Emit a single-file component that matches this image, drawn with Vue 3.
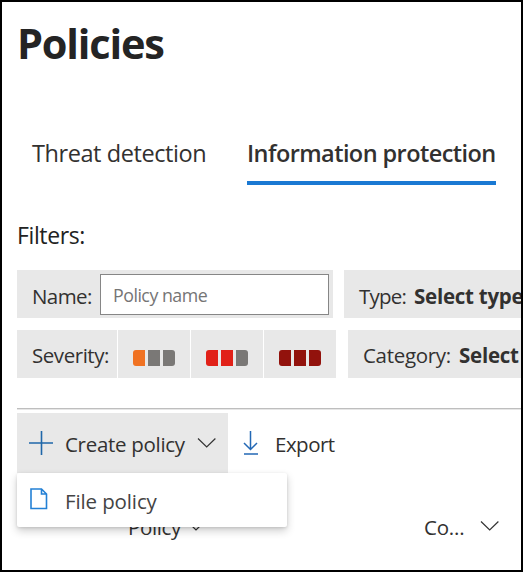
<script setup>
const severities = [
  { name: 'low', on: 1 },
  { name: 'medium', on: 2 },
  { name: 'high', on: 3 },
]
</script>

<template>
  <main class="page">
    <h1><span>Policies</span></h1>
    <nav class="tabs">
      <a class="tab t1">Threat detection</a>
      <a class="tab active">Information protection</a>
    </nav>
    <div class="filters-title"><span>Filters:</span></div>
    <div class="row">
      <label class="filter name">
        <span class="name-label">Name:</span>
        <input type="text" placeholder="Policy name" />
      </label>
      <div class="filter type"><span class="type-label">Type:</span><b class="type-value">Select type</b></div>
    </div>
    <div class="row second">
      <div class="severity">
        <div class="sev-label"><span>Severity:</span></div>
        <div v-for="s in severities" :key="s.name" class="sev" :class="s.name">
          <i v-for="n in 3" :key="n" :class="{ on: n <= s.on }"></i>
        </div>
      </div>
      <div class="filter category"><span class="cat-label">Category:</span><b class="cat-value">Select</b></div>
    </div>
    <div class="rule"></div>
    <div class="toolbar">
      <div class="create">
        <svg class="plus" width="24" height="24" viewBox="0 0 24 24"><path d="M12.5 0v24M0 12h24" /></svg>
        <span class="create-text">Create policy</span>
        <svg class="chev" width="20" height="12" viewBox="0 0 20 12"><path d="M1 1.5l8.700 8.500L18.400 1.500" /></svg>
        <div class="menu">
          <svg width="18" height="22" viewBox="0 0 18 22"><path d="M1 1h10.500l5 5V20.500H1zM11.500 1v5h5" /></svg>
          <span class="file-text">File policy</span>
        </div>
      </div>
      <div class="export">
        <svg width="16" height="25" viewBox="0 0 16 25"><path d="M7.500 0v18.500M1 12l6.500 6.500L14 12M1 23h14" /></svg>
        <span class="export-text">Export</span>
      </div>
    </div>
    <div class="head">
      <span class="policy-text">Policy</span>
      <svg class="small" width="10" height="7" viewBox="0 0 10 7"><path d="M1 1l4 4 4-4" /></svg>
      <span class="co-text">Co...</span>
      <svg class="chev" width="20" height="12" viewBox="0 0 20 12"><path d="M1 1.500l8.700 8.500L18.400 1.500" /></svg>
    </div>
  </main>
</template>

<style>
body { margin: 0; background: #fff; }
</style>

<style scoped>
* { box-sizing: border-box; }
.page {
  width: 523px; height: 572px; overflow: hidden;
  border: 2px solid #000; padding-left: 15px;
  display: flex; flex-direction: column;
  font-family: "Open Sans", "Noto Sans", sans-serif;
  font-size: 20.5px; color: #323130; background: #fff;
  white-space: nowrap;
}
svg { flex: none; display: block; fill: none; stroke: #333; stroke-width: 1.2; }
span, b { flex: none; }
h1 { margin: 11px 0 0; height: 60px; line-height: 60px; font-size: 41.5px; font-weight: 700; color: #242424; letter-spacing: -1.2px; }
.tabs { display: flex; height: 45px; margin-top: 67px; padding-left: 15px; margin-bottom: 31px; font-size: 23.5px; line-height: 27px; }
.tab { height: 45px; }
.t1 { width: 215px; letter-spacing: -0.42px; }
.active { width: 249px; border-bottom: 4px solid #1a79d3; font-weight: 600; letter-spacing: -0.57px; }
.filters-title { height: 40px; line-height: 39px; font-size: 23px; color: #222; letter-spacing: -0.38px; margin-bottom: 14px; }
.row { display: flex; height: 48px; gap: 11px; line-height: 48px; flex: none; }
.second { margin-top: 12px; gap: 12px; }
.filter { display: flex; align-items: flex-start; background: #e8e8e8; padding-left: 15px; flex: none; }
.filter span, .filter b { padding-top: 2px; }
.second .filter span, .second .filter b { padding-top: 1px; }
.name { width: 316px; }
.name-label { width: 68px; letter-spacing: -0.6px; }
input { width: 229px; height: 41px; margin: 4px 0 0; border: 1px solid #868686; border-radius: 0; background: #fff; padding: 1px 12px 0 12px; font: 17.8px "Open Sans", sans-serif; letter-spacing: -0.5px; }
input::placeholder { color: #757575; opacity: 1; }
.type, .category { width: 200px; }
.type-label { width: 55px; letter-spacing: -0.8px; }
.type-value { letter-spacing: -0.25px; }
.cat-label { width: 96px; letter-spacing: -0.3px; }
.cat-value { letter-spacing: -0.25px; }
.severity { display: flex; gap: 1px; width: 319px; flex: none; }
.sev-label { width: 100px; background: #e8e8e8; padding-left: 15px; line-height: 51px; letter-spacing: -0.45px; }
.sev { width: 72px; background: #e8e8e8; display: flex; gap: 3px; padding: 20px 0 0 15px; }
.sev i { width: 12px; height: 16px; background: #7a7876; }
.sev i:first-child { border-radius: 3px 0 0 3px; }
.sev i:last-child { border-radius: 0 3px 3px 0; }
.low i.on { background: #f07222; }
.medium i.on { background: #e12118; }
.high i.on { background: #92120c; }
.rule { height: 2px; flex: none; margin-top: 30px; background: linear-gradient(#bebebe 50%, #e6e6e6 50%); }
.toolbar { display: flex; height: 60px; margin-top: 3px; flex: none; line-height: 58px; }
.create { position: relative; width: 211px; background: #e8e8e8; display: flex; align-items: center; padding-left: 12px; }
.create-text, .export-text { padding-top: 2px; }
.plus { stroke: #1f67a9; stroke-width: 1.6; margin-right: 12px; }
.create-text { width: 132px; letter-spacing: -0.3px; }
.menu { position: absolute; left: 0; top: 60px; width: 270px; height: 54px; background: #fff; border-radius: 2px; box-shadow: 0 4px 9px rgba(0,0,0,.19), 0 1px 3px rgba(0,0,0,.12); display: flex; align-items: center; padding-left: 13px; line-height: 52px; z-index: 2; }
.menu svg { stroke: #2380d5; stroke-width: 1.6; margin: 0 17px 3px 0; }
.file-text { color: #444; letter-spacing: -0.12px; padding-top: 2px; }
.export { display: flex; align-items: center; padding-left: 15px; }
.export svg { stroke: #2368b5; stroke-width: 1.5; margin-right: 16px; }
.export-text { letter-spacing: -0.5px; }
.head { display: flex; align-items: center; height: 40px; margin-top: 33px; padding-left: 111px; line-height: 38px; flex: none; }
.policy-text { width: 63px; letter-spacing: -0.35px; padding-top: 2px; }
.small { margin-top: 5px; }
.co-text { margin-left: 223px; width: 56px; letter-spacing: -0.2px; padding-top: 2px; }
</style>
